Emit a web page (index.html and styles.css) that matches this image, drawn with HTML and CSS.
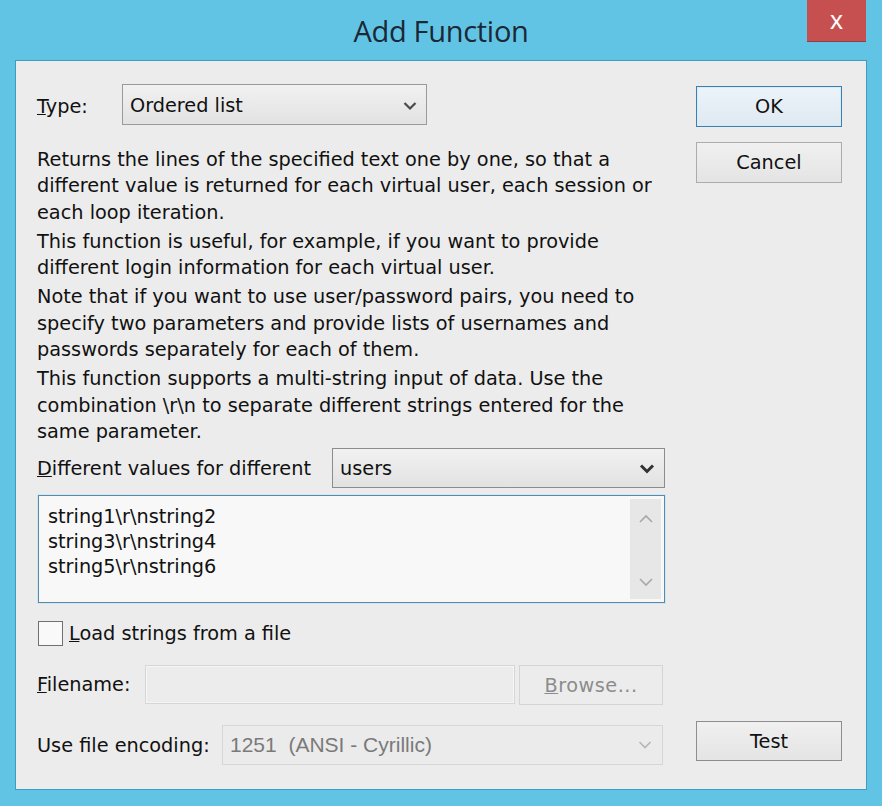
FILE: index.html
```html
<!DOCTYPE html>
<html>
<head>
<meta charset="utf-8">
<title>Add Function</title>
<link rel="stylesheet" href="styles.css">
</head>
<body>
<div class="window">
  <div class="titlebar">
    <span class="spacer"></span>
    <h1 class="title">Add Function</h1>
    <div class="close">x</div>
  </div>
  <div class="client">
    <div class="main">
      <div class="row type-row">
        <span class="label type-label"><u>T</u>ype:</span>
        <div class="select type-select">
          <span>Ordered list</span>
          <svg class="chev" width="14" height="10" viewBox="0 0 14 10"><path d="M1.5 2 L7 7.5 L12.5 2" fill="none" stroke="#4a4a4a" stroke-width="2.2"/></svg>
        </div>
      </div>
      <div class="desc">
        <p>Returns the lines of the specified text one by one, so that a<br>different value is returned for each virtual user, each session or<br>each loop iteration.</p>
        <p>This function is useful, for example, if you want to provide<br>different login information for each virtual user.</p>
        <p>Note that if you want to use user/password pairs, you need to<br>specify two parameters and provide lists of usernames and<br>passwords separately for each of them.</p>
        <p>This function supports a multi-string input of data. Use the<br>combination \r\n to separate different strings entered for the<br>same parameter.</p>
      </div>
      <div class="row diff-row">
        <span class="label diff-label"><u>D</u>ifferent values for different</span>
        <div class="select users-select">
          <span>users</span>
          <svg class="chev" width="16" height="11" viewBox="0 0 16 11"><path d="M2 2.5 L8 8.5 L14 2.5" fill="none" stroke="#333" stroke-width="3"/></svg>
        </div>
      </div>
      <div class="textarea">
        <div class="strings">string1\r\nstring2<br>string3\r\nstring4<br>string5\r\nstring6</div>
        <div class="scrollbar">
          <svg width="16" height="10" viewBox="0 0 16 10"><path d="M2 8 L8 2 L14 8" fill="none" stroke="#a8a8a8" stroke-width="1.6"/></svg>
          <svg width="16" height="10" viewBox="0 0 16 10"><path d="M2 2 L8 8 L14 2" fill="none" stroke="#a8a8a8" stroke-width="1.6"/></svg>
        </div>
      </div>
      <div class="row check-row">
        <span class="checkbox"></span>
        <span class="label"><u>L</u>oad strings from a file</span>
      </div>
      <div class="row file-row">
        <span class="label file-label"><u>F</u>ilename:</span>
        <div class="input"></div>
        <div class="btn browse"><u>B</u>rowse...</div>
      </div>
      <div class="row enc-row">
        <span class="label enc-label">Use file encoding:</span>
        <div class="select enc-select">
          <span>1251&nbsp; (ANSI - Cyrillic)</span>
          <svg class="chev" width="14" height="10" viewBox="0 0 14 10"><path d="M1.5 2 L7 7.5 L12.5 2" fill="none" stroke="#b5b5b5" stroke-width="1.6"/></svg>
        </div>
      </div>
    </div>
    <div class="side">
      <div class="btn ok">OK</div>
      <div class="btn cancel">Cancel</div>
      <div class="btn test">Test</div>
    </div>
  </div>
</div>
</body>
</html>
```
FILE: styles.css
```css
* { box-sizing: border-box; }
html, body { margin: 0; padding: 0; }
body {
  width: 882px;
  height: 806px;
  overflow: hidden;
  font-family: "DejaVu Sans", sans-serif;
  font-size: 19.3px;
  color: #111;
}
.window {
  width: 882px;
  height: 806px;
  background: #62c4e5;
  padding: 0 15px 16px 15px;
  display: flex;
  flex-direction: column;
}
.titlebar {
  height: 60px;
  display: grid;
  grid-template-columns: 1fr auto 1fr;
  margin: 0 -15px;
}
.title {
  margin: 0;
  font-family: "Open Sans", "Noto Sans", sans-serif;
  font-weight: 400;
  font-size: 29px;
  color: #1b2836;
  line-height: 62px;
  letter-spacing: -0.3px;
}
.close {
  justify-self: end;
  align-self: start;
  margin-right: 16px;
  width: 59px;
  height: 42px;
  background: #c64f50;
  border-bottom: 1px solid #8f3c45;
  color: #fff;
  font-family: "Liberation Sans", sans-serif;
  font-size: 26px;
  line-height: 40px;
  text-align: center;
}
.client {
  flex: 1;
  background: #ececec;
  border: 1px solid #3d9cc2;
  display: flex;
  padding: 23px 0 0 21px;
}
.main {
  width: 628px;
  display: flex;
  flex-direction: column;
}
.row {
  display: flex;
  align-items: center;
}
.label { white-space: nowrap; }
.type-label { width: 85px; padding-top: 3px; }
.select {
  display: flex;
  align-items: center;
  justify-content: space-between;
  border: 1px solid #9a9a9a;
  background: linear-gradient(#f1f1f1, #e2e2e2);
  padding: 0 9px 0 7px;
}
.type-select { width: 305px; height: 41px; padding-top: 2px; }
.desc { margin-top: 22px; }
.desc p {
  margin: 0 0 3px 0;
  line-height: 26.3px;
  white-space: nowrap;
}
.diff-row { margin-top: 0; }
.diff-label { width: 295px; }
.users-select { width: 333px; height: 40px; border-color: #8c8c8c; padding-right: 9px; }
.textarea {
  margin-top: 7px;
  margin-left: 1px;
  width: 627px;
  height: 108px;
  border: 1px solid #5b87a8;
  box-shadow: 0 0 0 1px #cfe6f3;
  background: #f8f8f8;
  display: flex;
  justify-content: space-between;
  padding: 3px 3px 3px 9px;
}
.strings {
  line-height: 25px;
  padding-top: 5px;
  white-space: nowrap;
}
.scrollbar {
  width: 31px;
  background: #e7e7e7;
  display: flex;
  flex-direction: column;
  justify-content: space-between;
  align-items: center;
  padding: 15px 0 12px;
}
.check-row { margin-top: 18px; height: 25px; margin-left: 1px; }
.checkbox {
  width: 25px;
  height: 25px;
  border: 1px solid #707070;
  background: #f9f9f9;
  margin-right: 6px;
}
.file-row { margin-top: 17px; }
.file-label { width: 108px; }
.input {
  width: 370px;
  height: 39px;
  border: 1px solid #d6d6d6;
  background: #ececec;
  box-shadow: inset 0 0 0 1px #f6f6f6;
  margin-right: 4px;
}
.btn {
  display: flex;
  align-items: center;
  justify-content: center;
  border: 1px solid #acacac;
  background: linear-gradient(#f0f0f0, #e4e4e4);
  white-space: nowrap;
}
.browse {
  width: 144px;
  height: 40px;
  margin-top: 2px;
  color: #8c8c8c;
  border-color: #d4d4d4;
  background: #ececec;
  letter-spacing: 0.5px;
}
.enc-row { margin-top: 20px; }
.enc-label { width: 185px; }
.enc-select {
  width: 441px;
  height: 40px;
  border-color: #d6d6d6;
  background: #ebebeb;
  color: #7a7a7a;
  font-family: "Liberation Sans", sans-serif;
  font-size: 21px;
  padding-right: 10px;
}
.side {
  width: 146px;
  margin-left: 31px;
  display: flex;
  flex-direction: column;
  padding: 2px 0 28px;
}
.ok {
  height: 41px;
  border-color: #3c7fb1;
  background: linear-gradient(#ecf4fa, #dfe9f1);
  box-shadow: inset 0 0 0 1px #d7ebf8;
}
.cancel { height: 41px; margin-top: 15px; }
.test { height: 40px; margin-top: auto; border-color: #8e8e8e; }
```
